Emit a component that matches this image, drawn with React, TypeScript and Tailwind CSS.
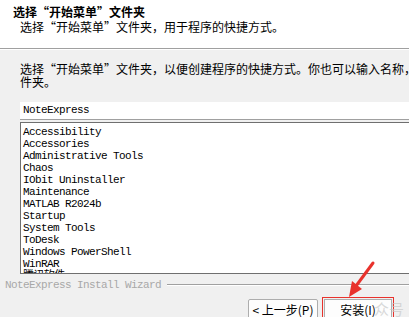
import React from "react";

const cjk = { fontFamily: '"Noto Sans CJK SC", "Noto Sans", sans-serif' };
const mono = { fontFamily: '"Liberation Mono", "Noto Sans CJK SC", monospace' };

const folders = [
  "Accessibility",
  "Accessories",
  "Administrative Tools",
  "Chaos",
  "IObit Uninstaller",
  "Maintenance",
  "MATLAB R2024b",
  "Startup",
  "System Tools",
  "ToDesk",
  "Windows PowerShell",
  "WinRAR",
  "腾讯软件",
];

function Arrow() {
  return (
    <svg className="pointer-events-none absolute left-[340px] top-[260px]" width="40" height="42" viewBox="0 0 40 42">
      <path d="M33 3 L16 26" stroke="#e8322c" strokeWidth="3" strokeLinecap="round" fill="none" />
      <path d="M9 37 L12 21 L22 29 Z" fill="#e8322c" />
    </svg>
  );
}

export default function App() {
  return (
    <div className="relative h-[317px] w-[409px] overflow-hidden bg-[#f0f0f0] text-black" style={cjk}>
      {/* header */}
      <div className="h-[48px] bg-white pl-[13px] pt-[4px]">
        <h1 className="text-[12px] font-bold leading-[16px]">选择“开始菜单”文件夹</h1>
        <p className="pl-[7px] text-[12px] leading-[14px]">选择“开始菜单”文件夹，用于程序的快捷方式。</p>
      </div>
      <div className="h-[2px] border-t border-[#a0a0a0] bg-white" />

      {/* body */}
      <div className="pl-[20px] pt-[12px]">
        <p className="whitespace-nowrap text-[12px] leading-[13px]">选择“开始菜单”文件夹，以便创建程序的快捷方式。你也可以输入名称，来创建新文件夹。</p>
        <p className="text-[12px] leading-[13px]">件夹。</p>

        <div
          className="mt-[14px] h-[18px] w-[420px] border-b border-[#a0a0a0] bg-white pl-[3px] text-[11px] leading-[17px] tracking-[-0.6px]"
          style={mono}
        >
          NoteExpress
        </div>
        <div className="mt-[2px] h-[152px] w-[420px] overflow-hidden border border-[#6f6f6f] bg-white pl-[2px] pt-[3px]">
          {folders.map((f) => (
            <div key={f} className="h-[12px] whitespace-nowrap text-[11px] leading-[12px] tracking-[-0.6px]" style={mono}>
              {f}
            </div>
          ))}
        </div>
      </div>

      {/* branding line */}
      <div className="mt-[4px] flex items-center pl-[5px]">
        <span className="whitespace-nowrap text-[11px] leading-[14px] tracking-[-0.6px] text-[#a8a8a8]" style={mono}>
          NoteExpress Install Wizard
        </span>
        <div className="ml-[6px] flex-1">
          <div className="h-[2px] border-t border-[#a0a0a0] bg-white" />
        </div>
      </div>

      {/* buttons */}
      <div className="mt-[5px] flex items-start pl-[248px]">
        <button className="mt-[2px] flex h-[21px] w-[70px] items-center justify-center rounded-[2px] border border-[#adadad] bg-[#fdfdfd] text-[12px] leading-[14px]">
          &lt; 上一步(P)
        </button>
        <div className="ml-[4px] flex border border-[#e8322c] p-[1px]">
          <button className="flex h-[21px] w-[68px] items-center justify-center border border-[#adadad] bg-[#fdfdfd] text-[12px] leading-[14px]">
            安装(I)
          </button>
        </div>
      </div>

      <span className="pointer-events-none absolute left-[374px] top-[298px] text-[15px] text-[#c8c8c8]/70">众号</span>
      <Arrow />
    </div>
  );
}
